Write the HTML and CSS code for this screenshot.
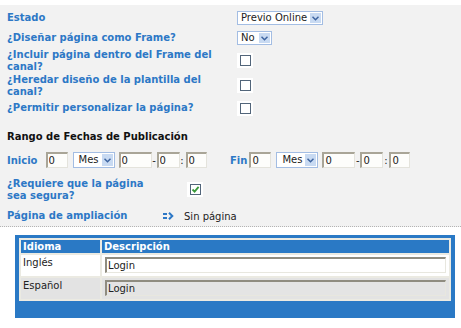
FILE: index.html
```html
<!DOCTYPE html>
<html lang="es">
<head>
    <meta charset="UTF-8">
    <title>Propiedades de la página</title>
    <link rel="stylesheet" href="styles.css">
</head>
<body>
    <div class="panel">
        <div class="row">
            <div class="label">Estado</div>
            <span class="select select-state"><span>Previo Online</span><span class="select-btn"><svg width="7" height="5" viewBox="0 0 7 5"><path d="M0.5 0.8 L3.5 3.8 L6.5 0.8" fill="none" stroke="#3d64a0" stroke-width="1.5"/></svg></span></span>
        </div>
        <div class="row">
            <div class="label">¿Diseñar página como Frame?</div>
            <span class="select select-yn"><span>No</span><span class="select-btn"><svg width="7" height="5" viewBox="0 0 7 5"><path d="M0.5 0.8 L3.5 3.8 L6.5 0.8" fill="none" stroke="#3d64a0" stroke-width="1.5"/></svg></span></span>
        </div>
        <div class="row row-tall">
            <div class="label">¿Incluir página dentro del Frame del<br>canal?</div>
            <span class="check"><span class="check-box"></span></span>
        </div>
        <div class="row row-tall">
            <div class="label">¿Heredar diseño de la plantilla del<br>canal?</div>
            <span class="check"><span class="check-box"></span></span>
        </div>
        <div class="row">
            <div class="label">¿Permitir personalizar la página?</div>
            <span class="check"><span class="check-box"></span></span>
        </div>

        <div class="heading">Rango de Fechas de Publicación</div>

        <div class="row dates">
            <div class="date-group">
                <span class="date-label">Inicio</span>
                <input class="field f-day" type="text" value="0">
                <span class="select select-month"><span>Mes</span><span class="select-btn"><svg width="7" height="5" viewBox="0 0 7 5"><path d="M0.5 0.8 L3.5 3.8 L6.5 0.8" fill="none" stroke="#3d64a0" stroke-width="1.5"/></svg></span></span>
                <input class="field f-year" type="text" value="0">
                <span class="sep">-</span>
                <input class="field f-hour" type="text" value="0">
                <span class="sep">:</span>
                <input class="field f-min" type="text" value="0">
            </div>
            <div class="date-group date-end">
                <span class="date-label">Fin</span>
                <input class="field f-day" type="text" value="0">
                <span class="select select-month"><span>Mes</span><span class="select-btn"><svg width="7" height="5" viewBox="0 0 7 5"><path d="M0.5 0.8 L3.5 3.8 L6.5 0.8" fill="none" stroke="#3d64a0" stroke-width="1.5"/></svg></span></span>
                <input class="field f-year" type="text" value="0">
                <span class="sep">-</span>
                <input class="field f-hour" type="text" value="0">
                <span class="sep">:</span>
                <input class="field f-min" type="text" value="0">
            </div>
        </div>

        <div class="row row-tall secure">
            <div class="label label-secure">¿Requiere que la página<br>sea segura?</div>
            <span class="check"><span class="check-box"><svg width="9" height="9" viewBox="0 0 9 9"><path d="M1.5 4.5 L3.6 6.6 L7.6 1.8" fill="none" stroke="#3a9a3a" stroke-width="1.8"/></svg></span></span>
        </div>
        <div class="row extra">
            <div class="label label-extra">Página de ampliación</div>
            <svg class="arrow" width="11" height="8" viewBox="0 0 11 8">
                <rect x="0" y="1" width="4" height="2" fill="#2d78c6"/>
                <rect x="0" y="5" width="4" height="2" fill="#2d78c6"/>
                <path d="M6 0.7 L9.3 4 L6 7.3" fill="none" stroke="#2d78c6" stroke-width="2"/>
            </svg>
            <span class="plain">Sin página</span>
        </div>
    </div>

    <div class="lang-box">
        <table class="lang-table">
            <tr>
                <th class="col-lang">Idioma</th>
                <th>Descripción</th>
            </tr>
            <tr>
                <td>Inglés</td>
                <td><input class="desc-field" type="text" value="Login"></td>
            </tr>
            <tr class="alt">
                <td>Español</td>
                <td><input class="desc-field" type="text" value="Login"></td>
            </tr>
        </table>
    </div>
</body>
</html>
```

FILE: styles.css
```css
body {
    margin: 0;
    font-family: "DejaVu Sans", Verdana, sans-serif;
    font-size: 10px;
    background-color: #fff;
    color: #222;
}
.panel {
    margin-top: 5px;
    padding: 3px 0 0 7px;
    background-color: #f2f2f2;
    border-bottom: 1px dotted #b4b4b4;
}
.row {
    display: flex;
    align-items: center;
    height: 20px;
}
.row-tall {
    height: 25px;
}
.label {
    width: 230px;
    font-weight: bold;
    color: #2d78c6;
    line-height: 12px;
}
.select {
    display: inline-flex;
    align-items: center;
    justify-content: space-between;
    box-sizing: border-box;
    height: 14px;
    padding-left: 3px;
    border: 1px solid #a3bde3;
    background-color: #fff;
    color: #222;
    line-height: 12px;
}
.select-btn {
    display: flex;
    align-items: center;
    justify-content: center;
    width: 11px;
    height: 10px;
    margin-right: 1px;
    background-color: #c8daf2;
}
.select-state {
    width: 86px;
}
.select-yn {
    width: 35px;
}
.select-month {
    width: 42px;
    height: 16px;
    margin: 0 4px 0 5px;
    padding-left: 5px;
}
.select-month .select-btn {
    height: 12px;
}
.check {
    display: inline-flex;
    align-items: center;
    justify-content: center;
    width: 16px;
    height: 15px;
    background-color: #fff;
}
.check-box {
    display: flex;
    align-items: center;
    justify-content: center;
    box-sizing: border-box;
    width: 11px;
    height: 11px;
    border: 1px solid #52657a;
    background-color: #fff;
}
.heading {
    display: flex;
    align-items: center;
    height: 20px;
    margin-top: 8px;
    font-weight: bold;
    color: #111;
}
.dates {
    margin-top: 4px;
}
.date-group {
    display: flex;
    align-items: center;
    width: 223px;
}
.date-label {
    font-weight: bold;
    color: #2d78c6;
    margin-right: 8px;
}
.date-end .date-label {
    margin-right: 2px;
}
.field {
    box-sizing: border-box;
    height: 16px;
    margin: 0;
    padding: 0 0 0 1px;
    border-style: solid;
    border-width: 2px 1px 1px 2px;
    border-color: #a9a597 #e4e3dc #e4e3dc #a9a597;
    background-color: #fdfdfb;
    font-family: inherit;
    font-size: 10px;
    color: #222;
    outline: none;
}
.f-day {
    width: 22px;
}
.f-year {
    width: 33px;
}
.f-hour {
    width: 23px;
}
.f-min {
    width: 21px;
}
.sep {
    width: 5px;
    text-align: center;
}
.sep + .f-min {
    margin-left: 1px;
}
.secure {
    margin-top: 7px;
}
.label-secure {
    width: 180px;
}
.extra {
    margin-top: 4px;
}
.label-extra {
    width: 156px;
}
.arrow {
    margin-right: 10px;
}
.plain {
    color: #222;
}
.lang-box {
    box-sizing: border-box;
    width: 440px;
    margin: 8px 0 0 15px;
    padding: 3px 4px 17px;
    background-color: #2a79c5;
}
.lang-table {
    width: 100%;
    border-spacing: 2px;
    background-color: #ebeae2;
    font-size: 10px;
}
.lang-table th {
    height: 13px;
    padding: 0 2px;
    line-height: 13px;
    text-align: left;
    color: #fff;
    background-color: #2a79c5;
}
.lang-table .col-lang {
    width: 75px;
}
.lang-table td {
    height: 17px;
    padding: 2px 3px 2px 2px;
    vertical-align: top;
    background-color: #fff;
    color: #222;
}
.lang-table td + td {
    padding-left: 3px;
}
.lang-table .alt td {
    background-color: #e3e3e3;
}
.desc-field {
    display: block;
    box-sizing: border-box;
    width: 100%;
    height: 16px;
    margin: 0;
    padding: 0 0 0 1px;
    border-style: solid;
    border-width: 2px 1px 1px 2px;
    border-color: #8f8c80 #e8e7df #e8e7df #8f8c80;
    background-color: #fff;
    font-family: inherit;
    font-size: 10px;
    color: #222;
    outline: none;
}
.alt .desc-field {
    background-color: #e4e4e4;
}
```
